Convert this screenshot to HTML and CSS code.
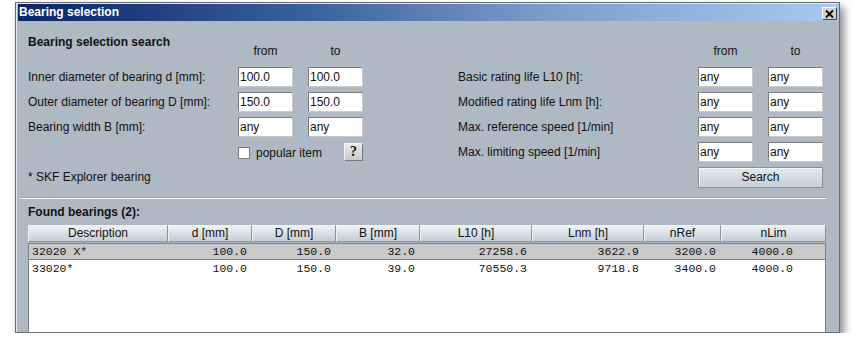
FILE: index.html
```html
<!DOCTYPE html>
<html>
<head>
<meta charset="utf-8">
<link rel="stylesheet" href="styles.css">
</head>
<body>
<div class="window">
  <div class="titlebar">
    <span class="title">Bearing selection</span>
    <span class="close"><svg width="9" height="8" viewBox="0 0 9 8"><path d="M1 0.5 L8 7.5 M8 0.5 L1 7.5" stroke="#000" stroke-width="1.8"/></svg></span>
  </div>
  <div class="content">
    <div class="search">
      <div class="heading">Bearing selection search</div>
      <div class="colhead c2">from</div>
      <div class="colhead c4">to</div>
      <div class="colhead c7">from</div>
      <div class="colhead c9">to</div>

      <div class="label c1">Inner diameter of bearing d [mm]:</div>
      <div class="field c2">100.0</div>
      <div class="field c4">100.0</div>
      <div class="label c6">Basic rating life L10 [h]:</div>
      <div class="field c7">any</div>
      <div class="field c9">any</div>

      <div class="label c1">Outer diameter of bearing D [mm]:</div>
      <div class="field c2">150.0</div>
      <div class="field c4">150.0</div>
      <div class="label c6">Modified rating life Lnm [h]:</div>
      <div class="field c7">any</div>
      <div class="field c9">any</div>

      <div class="label c1">Bearing width B [mm]:</div>
      <div class="field c2">any</div>
      <div class="field c4">any</div>
      <div class="label c6">Max. reference speed [1/min]</div>
      <div class="field c7">any</div>
      <div class="field c9">any</div>

      <div class="popular">
        <span class="check"><span class="box"></span>popular item</span>
        <span class="help">?</span>
      </div>
      <div class="label c6">Max. limiting speed [1/min]</div>
      <div class="field c7">any</div>
      <div class="field c9">any</div>

      <div class="label c1">* SKF Explorer bearing</div>
      <div class="button">Search</div>
    </div>
    <div class="separator"></div>
    <div class="found">Found bearings (2):</div>
    <div class="table">
      <div class="thead">
        <div class="th">Description</div>
        <div class="th">d [mm]</div>
        <div class="th">D [mm]</div>
        <div class="th">B [mm]</div>
        <div class="th">L10 [h]</div>
        <div class="th">Lnm [h]</div>
        <div class="th">nRef</div>
        <div class="th">nLim</div>
      </div>
      <div class="tbody">
        <div class="tr selected">
          <div class="td left">32020 X*</div>
          <div class="td">100.0</div>
          <div class="td">150.0</div>
          <div class="td">32.0</div>
          <div class="td">27258.6</div>
          <div class="td">3622.9</div>
          <div class="td">3200.0</div>
          <div class="td last">4000.0</div>
        </div>
        <div class="tr">
          <div class="td left">33020*</div>
          <div class="td">100.0</div>
          <div class="td">150.0</div>
          <div class="td">39.0</div>
          <div class="td">70550.3</div>
          <div class="td">9718.8</div>
          <div class="td">3400.0</div>
          <div class="td last">4000.0</div>
        </div>
      </div>
    </div>
  </div>
</div>
</body>
</html>
```

FILE: styles.css
```css
* { box-sizing: border-box; }
html, body { margin: 0; padding: 0; background: #ffffff; }
body {
  font-family: "Liberation Sans", Arial, sans-serif;
  font-size: 12px;
  color: #111;
  padding: 2px 0 0 15px;
}
.window {
  width: 825px;
  height: 331px;
  border: 1px solid #6a6a6a;
  padding: 1px 0 0 2px;
  background: #afb9c3;
  box-shadow: inset 1px 1px 0 #e6eaee, 4px 5px 8px rgba(0,0,0,0.45);
  display: flex;
  flex-direction: column;
  overflow: hidden;
}
.titlebar {
  height: 17px;
  flex: none;
  background: linear-gradient(to right, #0a246a 0%, #3a5f9e 35%, #7d9ecc 65%, #a6caf0 100%);
  display: flex;
  align-items: center;
  justify-content: space-between;
  padding: 0 2px 0 1px;
}
.title {
  color: #fff;
  font-weight: bold;
  font-size: 12px;
  line-height: 15px;
}
.close {
  width: 15px;
  height: 13px;
  margin-top: 2px;
  background: #d4d0c8;
  border: 1px solid;
  border-color: #fff #404040 #404040 #fff;
  display: flex;
  align-items: center;
  justify-content: center;
}
.content {
  flex: 1;
  display: flex;
  flex-direction: column;
  padding: 14px 13px 0 2px;
  min-height: 0;
}
.search {
  padding-left: 8px;
  display: grid;
  grid-template-columns: 210px 55px 15px 55px 95px 240px 55px 15px 55px;
  grid-template-rows: 27px repeat(5, 20px);
  row-gap: 5px;
}
.heading {
  grid-column: 1;
  grid-row: 1;
  font-weight: bold;
  line-height: 15px;
  align-self: start;
}
.colhead {
  grid-row: 1;
  text-align: center;
  align-self: end;
  line-height: 15px;
  margin-bottom: 3px;
}
.c1 { grid-column: 1; }
.c2 { grid-column: 2; }
.c4 { grid-column: 4; }
.c6 { grid-column: 6; }
.c7 { grid-column: 7; }
.c9 { grid-column: 9; }
.label {
  line-height: 20px;
  white-space: nowrap;
}
.field {
  background: #fff;
  border: 1px solid;
  border-color: #7c7c7c #c8c8c8 #c8c8c8 #7c7c7c;
  line-height: 18px;
  padding-left: 1px;
  height: 20px;
}
.popular {
  grid-column: 2 / 5;
  grid-row: 5;
  display: flex;
  align-items: center;
  justify-content: space-between;
}
.check {
  display: flex;
  align-items: center;
  gap: 6px;
  margin-top: 1px;
}
.box {
  width: 12px;
  height: 12px;
  background: #fff;
  border: 1px solid #7c7c7c;
}
.help {
  width: 19px;
  height: 18px;
  border: 1px solid;
  border-color: #f4f4f4 #7a7a7a #7a7a7a #f4f4f4;
  background: linear-gradient(#e8ecf0, #c4ccd4);
  font-family: "Liberation Serif", serif;
  font-weight: bold;
  font-size: 14px;
  line-height: 16px;
  text-align: center;
}
.button {
  grid-column: 7 / 10;
  grid-row: 6;
  height: 21px;
  border: 1px solid #8a9096;
  box-shadow: inset 1px 1px 0 #f6f8fa;
  background: linear-gradient(#e4e8ee, #c6ced6);
  text-align: center;
  line-height: 19px;
}
.separator {
  margin-top: 10px;
  height: 2px;
  border-top: 1px solid #96a0aa;
  border-bottom: 1px solid #fbfcfd;
  flex: none;
}
.found {
  margin: 6px 0 0 8px;
  font-weight: bold;
  line-height: 15px;
  flex: none;
}
.table {
  margin: 5px 0 0 8px;
  flex: 1;
  display: flex;
  flex-direction: column;
  min-height: 0;
}
.thead, .tr {
  display: grid;
  grid-template-columns: 140px 84px 84px 84px 112px 112px 77px 105px;
}
.thead { height: 17px; flex: none; }
.th {
  border: 1px solid;
  border-color: #f0f2f4 #8a9198 #8a9198 #f0f2f4;
  background: linear-gradient(#eef1f4, #c5cdd5);
  text-align: center;
  line-height: 15px;
  white-space: nowrap;
}
.tbody {
  flex: 1;
  background: #fff;
  border-left: 1px solid #7a7a7a;
  border-right: 1px solid #7a7a7a;
  margin-top: 1px;
}
.tr {
  height: 17px;
  font-family: "Liberation Mono", "Courier New", monospace;
  font-size: 11.5px;
  line-height: 15px;
  border: 1px solid transparent;
  margin-left: -1px;
  margin-right: -1px;
}
.tr.selected {
  background: #c9c9c9;
  border-color: #808080;
}
.td {
  text-align: right;
  padding-right: 6px;
  white-space: nowrap;
}
.td.last {
  padding-right: 34px;
}
.td.left {
  text-align: left;
  padding-left: 3px;
  padding-right: 0;
}
```
